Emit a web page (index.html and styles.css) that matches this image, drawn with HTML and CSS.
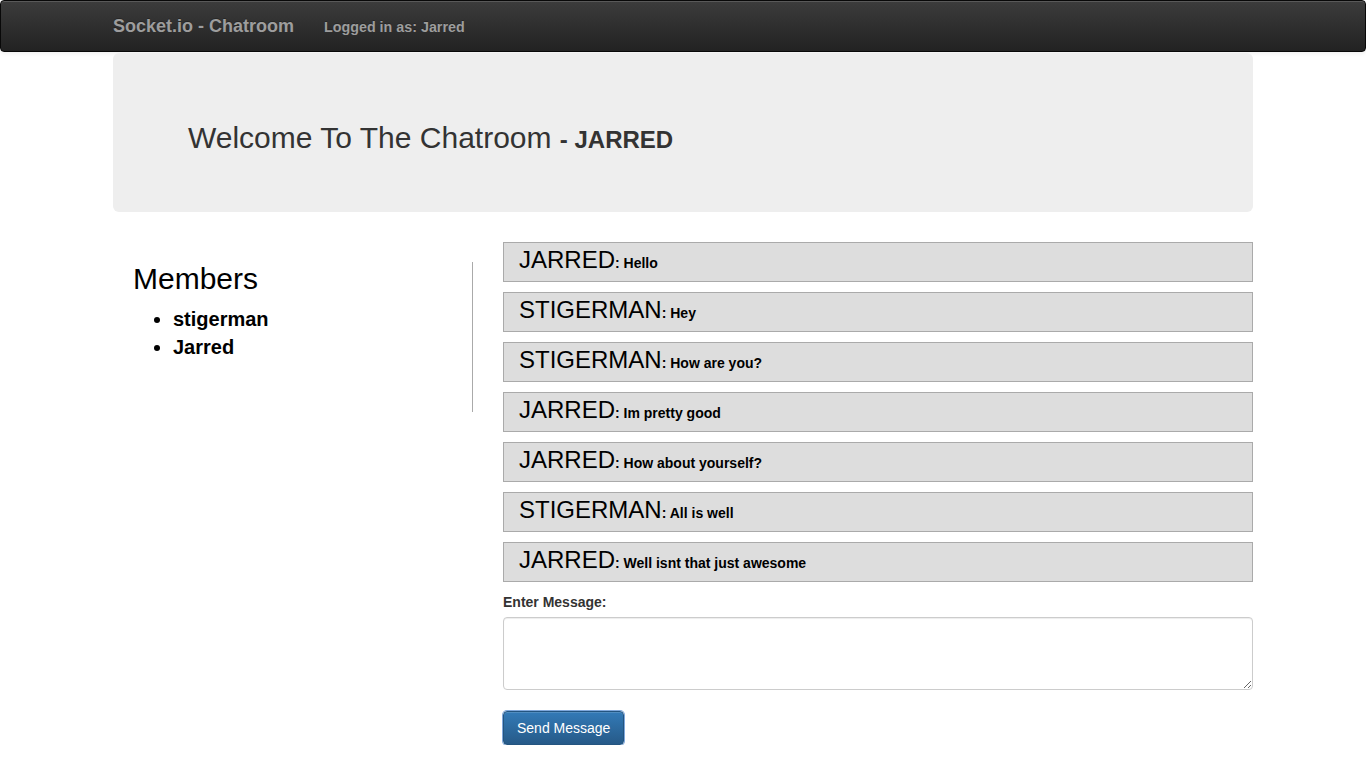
FILE: index.html
```html
<!DOCTYPE html>
<html>
<head>
<meta charset="utf-8">
<title>Socket.io - Chatroom</title>
<link rel="stylesheet" href="styles.css">
</head>
<body>
<nav class="navbar">
  <div class="container nav-inner">
    <span class="brand">Socket.io - Chatroom</span>
    <span class="nav-text">Logged in as: Jarred</span>
  </div>
</nav>
<div class="container">
  <div class="jumbotron">
    <h2 class="welcome">Welcome To The Chatroom <small>- JARRED</small></h2>
  </div>
  <div class="row">
    <div class="col-left">
      <div class="members">
        <h2 class="members-title">Members</h2>
        <ul class="member-list">
          <li>stigerman</li>
          <li>Jarred</li>
        </ul>
      </div>
    </div>
    <div class="col-right">
      <div class="chat">
        <div class="msg"><span class="who">JARRED</span>: Hello</div>
        <div class="msg"><span class="who">STIGERMAN</span>: Hey</div>
        <div class="msg"><span class="who">STIGERMAN</span>: How are you?</div>
        <div class="msg"><span class="who">JARRED</span>: Im pretty good</div>
        <div class="msg"><span class="who">JARRED</span>: How about yourself?</div>
        <div class="msg"><span class="who">STIGERMAN</span>: All is well</div>
        <div class="msg"><span class="who">JARRED</span>: Well isnt that just awesome</div>
      </div>
      <form class="msg-form">
        <label class="lbl" for="message">Enter Message:</label>
        <textarea id="message" class="input" rows="3"></textarea>
        <button type="button" class="btn">Send Message</button>
      </form>
    </div>
  </div>
</div>
</body>
</html>
```
FILE: styles.css
```css
* { box-sizing: border-box; }
html, body { margin: 0; padding: 0; }
body {
  font-family: "Liberation Sans", Arial, Helvetica, sans-serif;
  font-size: 14px;
  line-height: 1.42857;
  color: #333;
  background: #fff;
}
.container {
  width: 1170px;
  margin: 0 auto;
  padding: 0 15px;
}
.navbar {
  height: 52px;
  background: linear-gradient(to bottom, #3c3c3c 0, #222 100%);
  border: 1px solid #080808;
  border-radius: 4px;
  margin-bottom: 1px;
  box-shadow: inset 0 1px 0 rgba(255,255,255,.15), 0 1px 5px rgba(0,0,0,.08);
}
.nav-inner {
  display: flex;
  align-items: baseline;
  height: 50px;
  padding-top: 15px;
  gap: 30px;
}
.brand {
  font-size: 18px;
  line-height: 20px;
  font-weight: bold;
  color: #9d9d9d;
  text-shadow: 0 -1px 0 rgba(0,0,0,.25);
}
.nav-text {
  font-size: 14.3px;
  line-height: 20px;
  font-weight: bold;
  color: #9d9d9d;
  text-shadow: 0 -1px 0 rgba(0,0,0,.25);
}
.jumbotron {
  background: #eee;
  border-radius: 6px;
  padding: 48px 75px;
  margin-bottom: 30px;
  height: 159px;
}
.welcome {
  margin: 20px 0 10px;
  font-size: 30px;
  line-height: 1.1;
  font-weight: normal;
  color: #333;
}
.welcome small {
  font-size: 24px;
  font-weight: bold;
  color: #333;
}
.row {
  display: flex;
  margin: 0 -15px;
}
.col-left {
  width: 390px;
  padding: 0 15px;
}
.col-right {
  width: 780px;
  padding: 0 15px;
}
.members {
  margin-top: 20px;
  height: 150px;
  border-right: 1px solid #aaa;
  padding-left: 20px;
  color: #000;
}
.members-title {
  margin: 0 0 10px;
  font-size: 30px;
  line-height: 1.1;
  font-weight: normal;
}
.member-list {
  margin: 0;
  padding-left: 40px;
  font-size: 20px;
  font-weight: bold;
  line-height: 28px;
}
.chat {
  display: flex;
  flex-direction: column;
  gap: 10px;
  margin-bottom: 10px;
}
.msg {
  height: 40px;
  background: #ddd;
  border: 1px solid #aaa;
  padding: 0 15px;
  line-height: 34px;
  font-size: 14px;
  font-weight: bold;
  color: #000;
}
.who {
  font-size: 24px;
  font-weight: normal;
}
.msg-form {
  display: flex;
  flex-direction: column;
  align-items: flex-start;
}
.lbl {
  font-weight: bold;
  margin-bottom: 5px;
  line-height: 20px;
}
.input {
  width: 100%;
  height: 73px;
  border: 1px solid #ccc;
  border-radius: 4px;
  box-shadow: inset 0 1px 1px rgba(0,0,0,.075);
  padding: 6px 12px;
  font-family: inherit;
  font-size: 14px;
  margin: 0 0 21px;
  resize: vertical;
}
.btn {
  height: 34px;
  padding: 6px 13px;
  font-family: inherit;
  font-size: 14px;
  line-height: 20px;
  color: #fff;
  background: linear-gradient(to bottom, #337ab7 0, #265a88 100%);
  border: 1px solid #245580;
  border-radius: 4px;
  box-shadow: 0 0 0 1px #7fa8dc, inset 0 1px 0 rgba(255,255,255,.15);
  cursor: pointer;
}
```
